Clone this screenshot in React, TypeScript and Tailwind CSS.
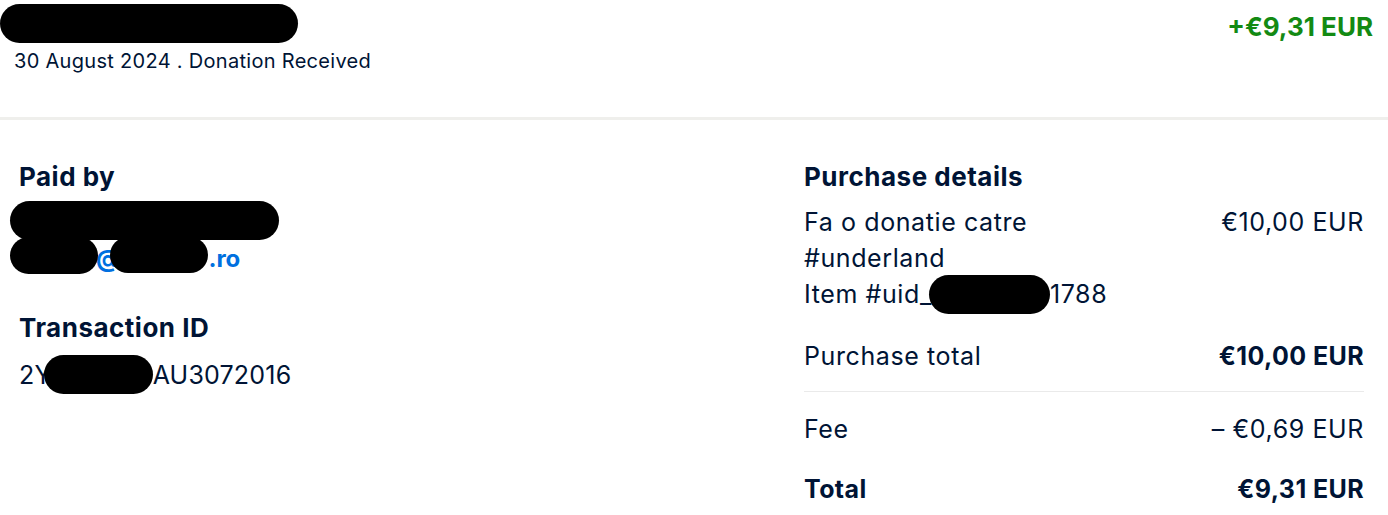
import React from "react";

const Pill = ({ className }: { className: string }) => (
  <span className={"inline-block bg-black rounded-full " + className} />
);

export default function App() {
  return (
    <div className="w-[1388px] h-[515px] bg-white text-[#001435] overflow-hidden" style={{ fontFamily: "Inter, 'Liberation Sans', sans-serif" }}>
      {/* Header */}
      <div className="flex justify-between h-[117px]">
        <div className="flex flex-col pt-[4px]">
          <Pill className="w-[298px] h-[39px]" />
          <div className="pl-[14px] mt-[6px] text-[20px] leading-[24px] tracking-[0.3px]">30 August 2024 . Donation Received</div>
        </div>
        <div className="pr-[15px] pt-[12px] text-[26px] leading-[30px] font-bold text-[#138a13]">+€9,31 EUR</div>
      </div>
      <div className="h-[3px] bg-[#efefec]" />

      {/* Body */}
      <div className="flex pl-[19px] pr-[24px] pt-[41px]">
        <div className="w-[785px] flex flex-col">
          <div className="text-[26px] leading-[32px] font-bold tracking-[0.5px]">Paid by</div>
          <div className="relative h-[80px] mt-[6px] -ml-[9px]">
            <Pill className="absolute left-0 top-[2px] w-[269px] h-[39px]" />
            <div className="absolute left-[86px] top-[48px] text-[24px] leading-[24px] font-bold text-[#0070e0]">@<span className="inline-block w-[88px]" />.ro</div>
            <Pill className="absolute left-0 top-[38px] w-[88px] h-[37px]" />
            <Pill className="absolute left-[100px] top-[38px] w-[98px] h-[36px]" />
          </div>
          <div className="text-[26px] leading-[32px] font-bold tracking-[0.5px] mt-[33px]">Transaction ID</div>
          <div className="text-[25px] leading-[36px] tracking-[0.2px] mt-[11px] flex items-center">
            <span>2Y</span>
            <Pill className="w-[109px] h-[39px] -ml-[8px]" />
            <span>AU3072016</span>
          </div>
        </div>
        <div className="flex-1 flex flex-col">
          <div className="text-[26px] leading-[32px] font-bold tracking-[0.5px]">Purchase details</div>
          <div className="flex justify-between text-[25px] leading-[36px] tracking-[0.6px] mt-[11px]">
            <div className="flex flex-col">
              <span>Fa o donatie catre</span>
              <span>#underland</span>
              <span className="flex items-center h-[36px]">Item #uid_<Pill className="w-[121px] h-[39px] -ml-[3px]" />1788</span>
            </div>
            <span>€10,00 EUR</span>
          </div>
          <div className="flex justify-between text-[25px] leading-[36px] tracking-[0.6px] mt-[26px]">
            <span>Purchase total</span>
            <span className="font-bold tracking-[0.4px]">€10,00 EUR</span>
          </div>
          <div className="h-px bg-[#eaeaea] mt-[17px]" />
          <div className="flex justify-between text-[25px] leading-[36px] tracking-[0.6px] mt-[19px]">
            <span>Fee</span>
            <span>– €0,69 EUR</span>
          </div>
          <div className="flex justify-between text-[25px] leading-[36px] tracking-[0.4px] mt-[24px] font-bold">
            <span>Total</span>
            <span>€9,31 EUR</span>
          </div>
        </div>
      </div>
    </div>
  );
}
